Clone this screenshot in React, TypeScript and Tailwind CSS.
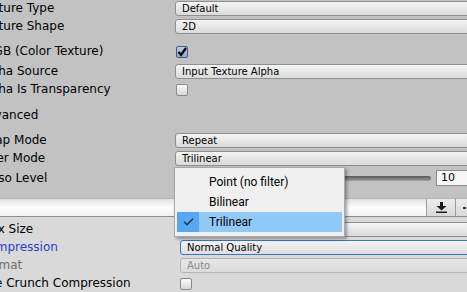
import clsx from "clsx";

function Field({ value, focused, disabled }: { value: string; focused?: boolean; disabled?: boolean }) {
  return (
    <div
      className={clsx(
        "h-[15px] flex-1 rounded-[3px] border pl-[6px] text-[10px] leading-[13px] flex items-center bg-gradient-to-b",
        focused
          ? "border-[#3d6fe0] from-[#f4f4f4] to-[#dedede] text-black"
          : disabled
          ? "border-[#b4b4b4] from-[#e6e6e6] to-[#dcdcdc] text-[#8a8a8a]"
          : "border-[#8f8f8f] from-[#f4f4f4] to-[#dadada] text-black"
      )}
    >
      {value}
    </div>
  );
}

function Check({ checked }: { checked?: boolean }) {
  return (
    <div
      className={clsx(
        "w-[12px] h-[12px] rounded-[2px] border flex items-center justify-center bg-gradient-to-b",
        checked ? "border-[#4b5a78] from-[#b8cbea] to-[#93a9d2]" : "border-[#8a8a8a] from-[#fbfbfb] to-[#d6d6d6]"
      )}
    >
      {checked && (
        <svg width="10" height="10" viewBox="0 0 10 10">
          <path d="M1.5 5 L4 8 L9 1" fill="none" stroke="#000" strokeWidth="2.2" />
        </svg>
      )}
    </div>
  );
}

function Row({ label, children, className, labelClass }: { label: string; children?: React.ReactNode; className?: string; labelClass?: string }) {
  return (
    <div className={clsx("h-[15px] flex items-center", className)}>
      <div className={clsx("w-[196px] shrink-0 text-[12px] leading-[15px] whitespace-nowrap", labelClass ?? "text-black")}>{label}</div>
      {children}
    </div>
  );
}

export default function App() {
  return (
    <div className="w-[467px] h-[292px] overflow-hidden relative bg-[#c2c2c2] font-['DejaVu_Sans',sans-serif]">
      <div className="flex flex-col h-full">
        {/* Texture settings */}
        <div className="h-[198px] shrink-0 -ml-[21px] w-[560px] flex flex-col">
          <Row label="Texture Type" className="mt-px">
            <Field value="Default" />
          </Row>
          <Row label="Texture Shape" className="mt-[3px]">
            <Field value="2D" />
          </Row>
          <Row label="sRGB (Color Texture)" className="mt-[10px]">
            <div className="ml-px">
              <Check checked />
            </div>
          </Row>
          <Row label="Alpha Source" className="mt-[5px]">
            <Field value="Input Texture Alpha" />
          </Row>
          <Row label="Alpha Is Transparency" className="mt-[3px]">
            <div className="ml-px">
              <Check />
            </div>
          </Row>
          <Row label="Advanced" className="mt-[11px]" />
          <Row label="Wrap Mode" className="mt-[10px]">
            <Field value="Repeat" />
          </Row>
          <Row label="Filter Mode" className="mt-[3px]">
            <Field value="Trilinear" />
          </Row>
          <div className="h-[16px] mt-[4px] flex items-center">
            <div className="w-[196px] shrink-0 text-[12px] leading-[15px] whitespace-nowrap text-black">Aniso Level</div>
            <div className="w-[256px] shrink-0 flex items-center">
              <div className="h-[5px] w-full rounded-full bg-gradient-to-b from-[#5a5a5a] via-[#7c7c7c] to-[#a0a0a0]" />
            </div>
            <div className="ml-[5px] h-[16px] w-[80px] border border-[#8a8a8a] bg-[#f6f6f6] pl-[4px] text-[11px] leading-[14px] text-black">10</div>
          </div>
        </div>

        {/* Platform tab bar */}
        <div className="h-[19px] shrink-0 border-t border-b border-t-[#b2b2b2] border-b-[#8c8c8c] bg-gradient-to-b from-[#e2e2e2] via-[#fbfbfb] to-[#f3f3f3] flex">
          <div className="w-[426px] shrink-0" />
          <div className="w-[30px] shrink-0 border-l border-r border-[#9c9c9c] bg-gradient-to-b from-[#ececec] to-[#d9d9d9] flex items-center justify-center">
            <svg width="11" height="11" viewBox="0 0 11 11">
              <rect x="4" y="0" width="3" height="4" fill="#1c1c1c" />
              <path d="M0.5 4 L10.5 4 L5.5 8.5 Z" fill="#1c1c1c" />
              <rect x="0" y="9.5" width="11" height="1.5" fill="#1c1c1c" />
            </svg>
          </div>
          <div className="flex-1 bg-gradient-to-b from-[#ececec] to-[#d9d9d9] flex items-center pl-[7px]">
            <div className="w-[3px] h-[2px] bg-[#333]" />
          </div>
        </div>

        {/* Platform settings */}
        <div className="flex-1 bg-[#d9d9d9]">
          <div className="-ml-[20px] w-[560px] flex flex-col">
            <Row label="Max Size" className="mt-[5px]">
              <div className="w-[4px] shrink-0" />
              <Field value="2048" />
            </Row>
            <Row label="Compression" className="mt-[3px]" labelClass="text-[#1a44d0]">
              <div className="w-[4px] shrink-0" />
              <Field value="Normal Quality" focused />
            </Row>
            <Row label="Format" className="mt-[3px]" labelClass="text-[#707070]">
              <div className="w-[4px] shrink-0" />
              <Field value="Auto" disabled />
            </Row>
            <Row label="Use Crunch Compression" className="mt-[3px]">
              <div className="w-[4px] shrink-0" />
              <Check />
            </Row>
          </div>
        </div>
      </div>

      {/* Filter mode popup */}
      <div className="absolute left-[174px] top-[167px] w-[171px] h-[70px] border border-[#a9a9a9] bg-[#f0f0f0] shadow-[2px_2px_3px_rgba(0,0,0,0.35)] pt-[4px] pl-[2px] pr-[2px] font-['Roboto',sans-serif] text-[12px] text-black">
        {["Point (no filter)", "Bilinear", "Trilinear"].map((item) => {
          const selected = item === "Trilinear";
          return (
            <div key={item} className={clsx("h-[20px] flex items-center", selected && "bg-[#91c9f7]")}>
              <div className={clsx("w-[22px] h-full shrink-0 flex items-center justify-center", selected && "bg-[#55a8f4]")}>
                {selected && (
                  <svg width="11" height="8" viewBox="0 0 11 8">
                    <path d="M1 3.8 L4 6.8 L10 0.8" fill="none" stroke="#2b2b2b" strokeWidth="1.4" />
                  </svg>
                )}
              </div>
              <span className="pl-[10px] leading-[20px]">{item}</span>
            </div>
          );
        })}
      </div>
    </div>
  );
}
